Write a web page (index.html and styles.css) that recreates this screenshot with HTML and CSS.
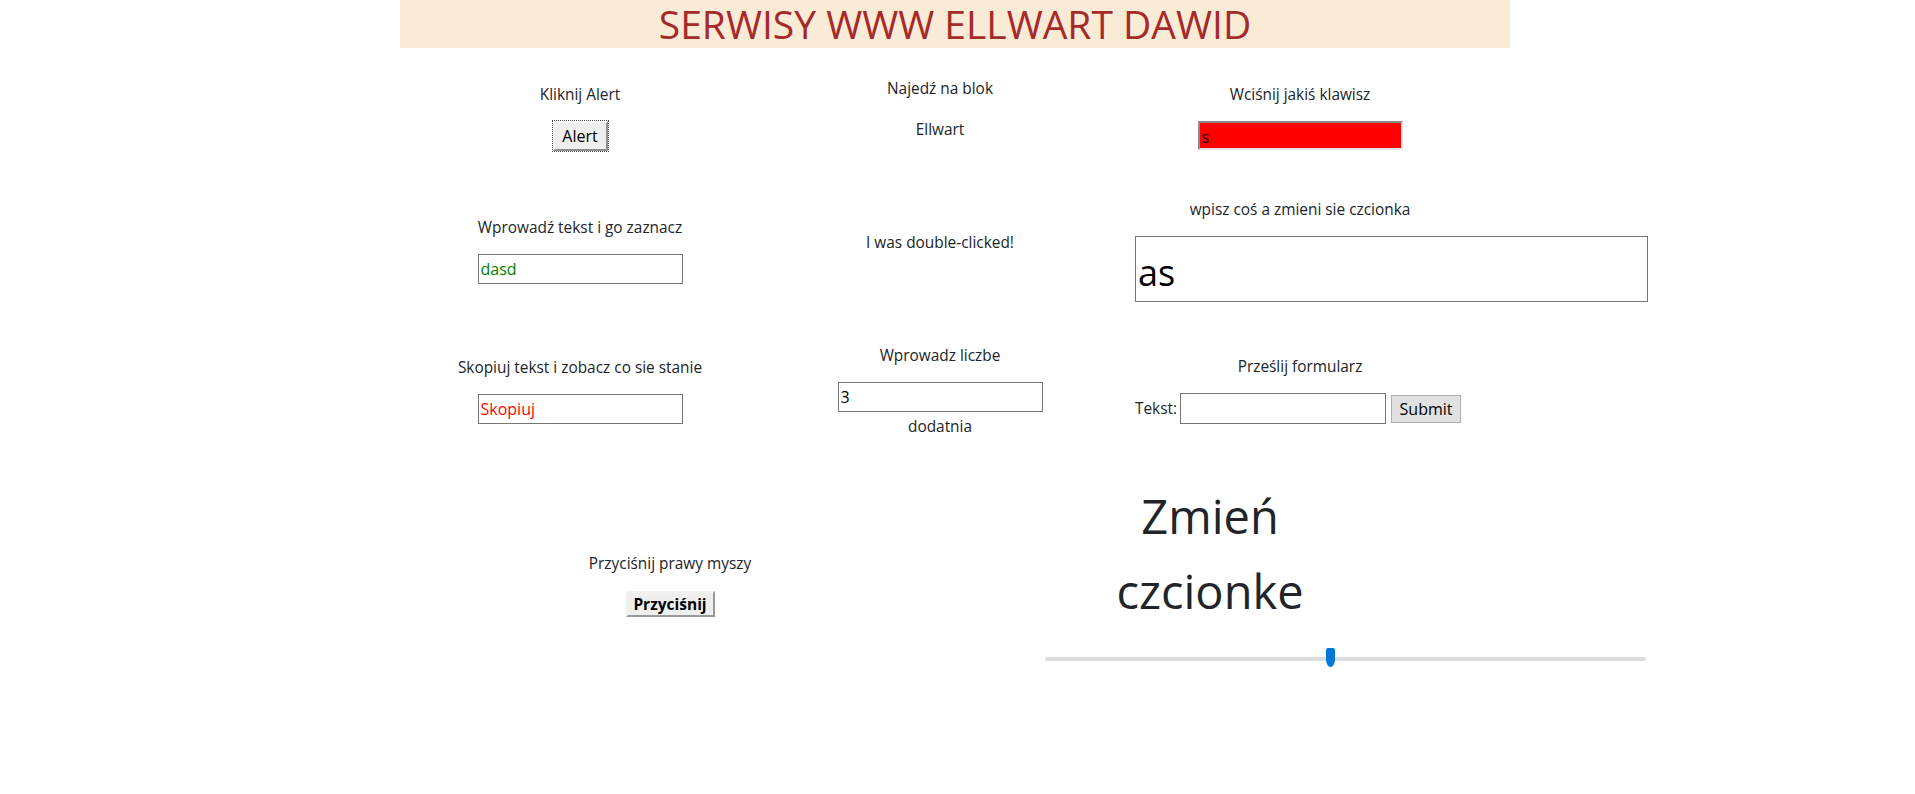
FILE: index.html
```html
<!DOCTYPE html>
<html lang="pl">
<head>
<meta charset="utf-8">
<title>Serwisy WWW Ellwart Dawid</title>
<link rel="stylesheet" href="styles.css">
</head>
<body>
<div class="page">
  <header class="top"><h1>SERWISY WWW ELLWART DAWID</h1></header>

  <section class="row r1">
    <div class="cell">
      <p class="label">Kliknij Alert</p>
      <button class="btn-classic focus" type="button">Alert</button>
    </div>
    <div class="cell lift">
      <p class="label">Najedź na blok</p>
      <p class="label">Ellwart</p>
    </div>
    <div class="cell">
      <p class="label">Wciśnij jakiś klawisz</p>
      <input class="field-red" type="text" value="s">
    </div>
  </section>

  <section class="row r2">
    <div class="cell">
      <p class="label">Wprowadź tekst i go zaznacz</p>
      <input class="field green" type="text" value="dasd">
    </div>
    <div class="cell lift">
      <p class="label">I was double-clicked!</p>
    </div>
    <div class="cell">
      <p class="label">wpisz coś a zmieni sie czcionka</p>
      <input class="field big" type="text" value="as">
    </div>
  </section>

  <section class="row r3">
    <div class="cell">
      <p class="label">Skopiuj tekst i zobacz co sie stanie</p>
      <input class="field red" type="text" value="Skopiuj">
    </div>
    <div class="cell low">
      <p class="label">Wprowadz liczbe</p>
      <div class="stack">
        <input class="field" type="number" value="3">
        <span class="label">dodatnia</span>
      </div>
    </div>
    <div class="cell">
      <p class="label">Prześlij formularz</p>
      <form class="form-line">
        <label class="label" for="tekst">Tekst:</label>
        <input class="field" id="tekst" type="text">
        <button class="btn-submit" type="button">Submit</button>
      </form>
    </div>
  </section>

  <section class="row r4">
    <div class="cell c4a">
      <p class="label">Przyciśnij prawy myszy</p>
      <button class="btn-classic bold" type="button">Przyciśnij</button>
    </div>
    <div class="c4b">
      <p class="huge">Zmień czcionke</p>
      <input class="slider" type="range" min="0" max="100" step="any" value="47.4">
    </div>
  </section>
</div>
</body>
</html>
```

FILE: styles.css
```css
* { box-sizing: border-box; }

body {
  margin: 0;
  background: #fff;
  color: #212529;
  font-family: "Open Sans", "Noto Sans", sans-serif;
  font-size: 15.4px;
  line-height: 29px;
}

.page {
  width: 1110px;
  margin-left: 400px;
}

.top {
  background: #faebd7;
  height: 48px;
  text-align: center;
}

.top h1 {
  margin: 0;
  font-size: 39px;
  font-weight: 400;
  line-height: 48px;
  color: #a52a2a;
}

.row {
  display: grid;
  grid-template-columns: repeat(3, 360px);
  align-items: center;
}

.r1 { height: 134px; }
.r2 { height: 132px; }
.r3 { height: 148px; }

.cell {
  display: flex;
  flex-direction: column;
  align-items: center;
  gap: 12px;
}

.cell.lift { padding-bottom: 12px; }
.cell.low { padding-top: 5px; }

.label {
  margin: 0;
  line-height: 29px;
  white-space: nowrap;
}

.stack {
  display: flex;
  flex-direction: column;
  align-items: center;
}

.field {
  width: 205px;
  height: 30px;
  border: 1px solid #767676;
  background: #fff;
  color: #000;
  font: inherit;
  font-size: 16px;
  line-height: normal;
  padding: 1px 2px 0;
  margin: 0;
  border-radius: 0;
}

.field.green { color: #008000; }
.field.red { color: #ff0000; }

.field[type=number]::-webkit-inner-spin-button,
.field[type=number]::-webkit-outer-spin-button {
  -webkit-appearance: none;
  margin: 0;
}

.field.big {
  align-self: flex-start;
  margin-left: 15px;
  width: 513px;
  height: 66px;
  font-size: 36px;
  padding: 8px 2px 0;
}

.field-red {
  width: 205px;
  height: 29px;
  margin: 0;
  padding: 2px 2px 0;
  background: #ff0000;
  color: #000;
  font: inherit;
  font-size: 16px;
  line-height: normal;
  border-width: 2px;
  border-style: solid;
  border-color: #8a8a8a #e3e3e3 #e3e3e3 #8a8a8a;
}

.btn-classic {
  width: 55px;
  height: 30px;
  padding: 0;
  margin: 0;
  font: inherit;
  font-size: 16px;
  line-height: normal;
  color: #000;
  background: #efefef;
  border-width: 2px;
  border-style: solid;
  border-color: #f7f7f7 #8f8f8f #8f8f8f #f7f7f7;
  border-radius: 0;
}

.btn-classic.focus {
  outline: 1px dotted #444;
  outline-offset: 0;
}

.btn-classic.bold {
  width: 89px;
  height: 26px;
  font-size: 15.5px;
  font-weight: 700;
  border-color: #f2f2f2 #9a9a9a #9a9a9a #f2f2f2;
}

.form-line {
  display: flex;
  align-items: center;
  margin: 0 4px 0 0;
}

.form-line .field { margin-left: 3px; width: 206px; height: 31px; }

.btn-submit {
  margin-left: 5px;
  width: 70px;
  height: 28px;
  padding: 0;
  font: inherit;
  font-size: 16px;
  line-height: normal;
  color: #000;
  background: #e1e1e1;
  border: 1px solid #adadad;
  border-radius: 0;
}

.r4 {
  grid-template-columns: repeat(2, 540px);
  align-items: start;
  height: 260px;
}

.c4a {
  padding-top: 87px;
  gap: 13px;
}

.c4b {
  padding-top: 17px;
}

.huge {
  margin: 0 auto;
  width: 240px;
  text-align: center;
  font-size: 47px;
  line-height: 75px;
}

.slider {
  -webkit-appearance: none;
  appearance: none;
  display: block;
  width: 601px;
  height: 20px;
  margin: 20px 0 0 105px;
  padding: 0;
  background: transparent;
}

.slider::-webkit-slider-runnable-track {
  height: 4px;
  background: #dcdcdc;
  border-radius: 2px;
}

.slider::-webkit-slider-thumb {
  -webkit-appearance: none;
  width: 9px;
  height: 19px;
  margin-top: -9px;
  background: #0078d7;
  border: none;
  border-radius: 2px 2px 50% 50% / 2px 2px 40% 40%;
}
```
